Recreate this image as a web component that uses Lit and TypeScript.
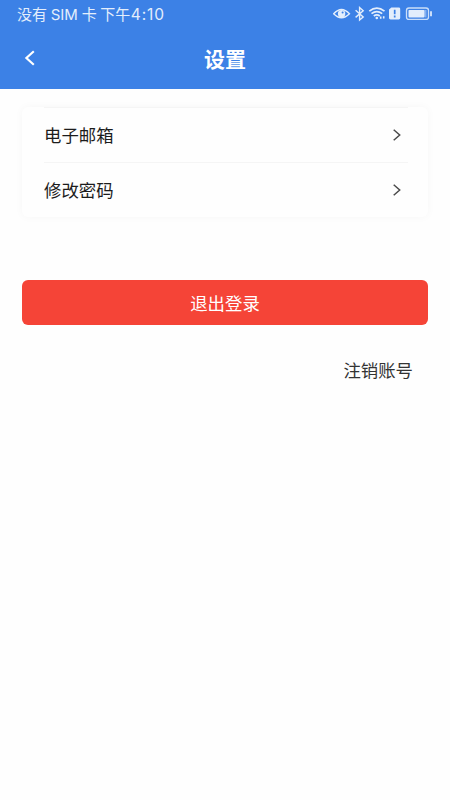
import { LitElement, html, css } from "lit";
import { customElement } from "lit/decorators.js";

@customElement("app-root")
export class AppRoot extends LitElement {
  static styles = css`
    :host {
      display: block;
      height: 800px;
      overflow: hidden;
      background: #fefefe;
      color: #1c1c1c;
      font-family: "Noto Sans CJK SC", sans-serif;
    }
    * { box-sizing: border-box; }
    svg { display: block; flex: none; }
    .top { height: 89px; background: #3c81e6; color: #fff; }
    .status {
      height: 28px;
      display: flex;
      align-items: center;
      justify-content: space-between;
      padding: 0 17px 0 17px;
      color: #e3eefc;
    }
    .carrier {
      padding-top: 1px;
      font-family: Inter, "Noto Sans CJK SC", sans-serif;
      font-size: 15px;
      line-height: 27px;
      word-spacing: -0.5px;
      white-space: pre;
    }
    .clock { margin-left: 0.5px; font-size: 15.5px; letter-spacing: 0.85px; }
    .nav {
      height: 61px;
      display: grid;
      grid-template-columns: 60px 1fr 60px;
      align-items: center;
      padding-bottom: 1px;
    }
    .back { margin-left: 24px; }
    .title { text-align: center; font-size: 21px; font-weight: 700; line-height: 30px; }
    .card {
      margin: 18px 22px 0;
      height: 110px;
      padding: 0 20px 0 22px;
      border-radius: 6px;
      background: #fefefe;
      box-shadow: 0 0 8px rgba(0, 0, 0, 0.035);
    }
    .row {
      height: 55px;
      display: flex;
      align-items: center;
      justify-content: space-between;
      padding-right: 7px;
      border-top: 1px solid #f5f5f5;
      font-size: 17.4px;
      line-height: 26px;
    }
    .logout {
      display: block;
      width: 406px;
      height: 45px;
      margin: 63px 22px 0;
      padding: 0;
      border: 0;
      border-radius: 6px;
      background: #f54437;
      color: #fff;
      font: 400 17.4px/45px "Noto Sans CJK SC", sans-serif;
    }
    .cancel {
      padding: 32px 37px 0 0;
      text-align: right;
      font-size: 17.4px;
      line-height: 26px;
      color: #333;
    }
  `;

  private row(label: string) {
    return html`<div class="row">
      <span>${label}</span>
      <svg width="9" height="12" viewBox="0 0 9 12" fill="none" stroke="#4a4a4a" stroke-width="1.5">
        <path d="M1.7 .8 7.7 6 1.7 11.2" />
      </svg>
    </div>`;
  }

  render() {
    return html`
      <header class="top">
        <div class="status">
          <span class="carrier">没有 SIM 卡 下午<span class="clock">4:10</span></span>
          <svg width="100" height="16" viewBox="333 6 100 16" fill="none" stroke="currentColor" stroke-width="1.5">
            <path d="M333.7 13.8Q341.5 5.2 349.4 13.8Q341.5 21.8 333.7 13.8Z" />
            <circle cx="341.6" cy="13.8" r="3.7" fill="currentColor" stroke="none" />
            <circle cx="342.6" cy="12.6" r="1" fill="#3c81e6" stroke="none" />
            <path d="M355.6 10.2 363.2 17 359.6 20V7.6L363.2 10.8 355.6 17.4" stroke-width="1.4" />
            <path d="M369.3 11.2Q376.8 5 384.5 11.2M371.5 13.7Q376.8 9.4 382.2 13.7M373.8 16Q376.8 13.8 379.8 16" stroke-width="1.7" />
            <circle cx="376.8" cy="18" r="1.3" fill="currentColor" stroke="none" />
            <path d="M380.7 18.8V16.4M383.7 16.2V18.6" stroke-width="1.6" />
            <path d="M391.3 7.5H398.7Q400.2 7.5 400.2 8.8V18Q400.2 19.4 398.7 19.4H390.6Q389 19.4 389 18V9.5Z" fill="currentColor" stroke="none" />
            <path d="M394.7 9.7V14.3M394.7 15.6V17.4" stroke="#3c81e6" stroke-width="1.7" />
            <rect x="406.5" y="8" width="22" height="11.4" rx="2.5" stroke-width="1.3" opacity=".85" />
            <rect x="408.5" y="10" width="16" height="7.4" rx=".8" fill="currentColor" stroke="none" />
            <rect x="424.5" y="10" width="2" height="7.4" fill="currentColor" opacity=".45" stroke="none" />
            <path d="M431 11.3V16.2" stroke-width="1.7" />
          </svg>
        </div>
        <nav class="nav">
          <svg class="back" width="12" height="16" viewBox="0 0 12 16" fill="none" stroke="currentColor" stroke-width="2.2">
            <path d="M9.8 1.3 2.4 8 9.8 14.7" />
          </svg>
          <span class="title">设置</span>
        </nav>
      </header>
      <main>
        <section class="card">${this.row("电子邮箱")}${this.row("修改密码")}</section>
        <button class="logout">退出登录</button>
        <div class="cancel">注销账号</div>
      </main>
    `;
  }
}
